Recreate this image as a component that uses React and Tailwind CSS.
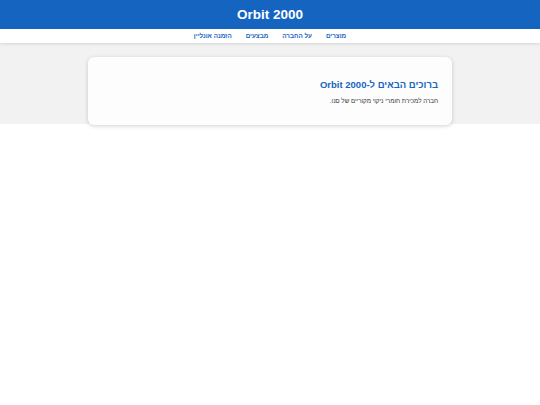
import React from 'react';

const links = ['מוצרים', 'על החברה', 'מבצעים', 'הזמנה אונליין'];

export default function App() {
  return (
    <div dir="rtl" className="min-h-[405px] bg-white" style={{ fontFamily: '"Liberation Sans", Arial, sans-serif' }}>
      <header className="bg-[#1565c0] h-[29px] flex items-center justify-center">
        <h1 className="text-white font-bold text-[13.5px] leading-none" dir="ltr">Orbit 2000</h1>
      </header>
      <nav className="relative z-10 bg-white h-[14px] flex items-center justify-center gap-[14px] shadow-[0_1px_3px_rgba(0,0,0,0.12)]">
        {links.map((l) => (
          <a key={l} href="#" className="text-[#1565c0] font-bold text-[6.3px] leading-none">
            {l}
          </a>
        ))}
      </nav>
      <main className="bg-[#f2f2f2] pt-[14px] h-[81px]">
        <section className="mx-auto w-[364px] bg-[#fdfdfd] rounded-[6px] shadow-[0_1px_4px_rgba(0,0,0,0.18)] px-[14px] pt-[21px] pb-[20px]">
          <h2 className="text-[#1565c0] font-bold text-[9.5px] leading-[13px]">ברוכים הבאים ל-Orbit 2000</h2>
          <p className="mt-[6px] text-[#333] text-[6.2px] leading-[8px]">חברה למכירת חומרי ניקוי מקוריים של סנו.</p>
        </section>
      </main>
    </div>
  );
}
